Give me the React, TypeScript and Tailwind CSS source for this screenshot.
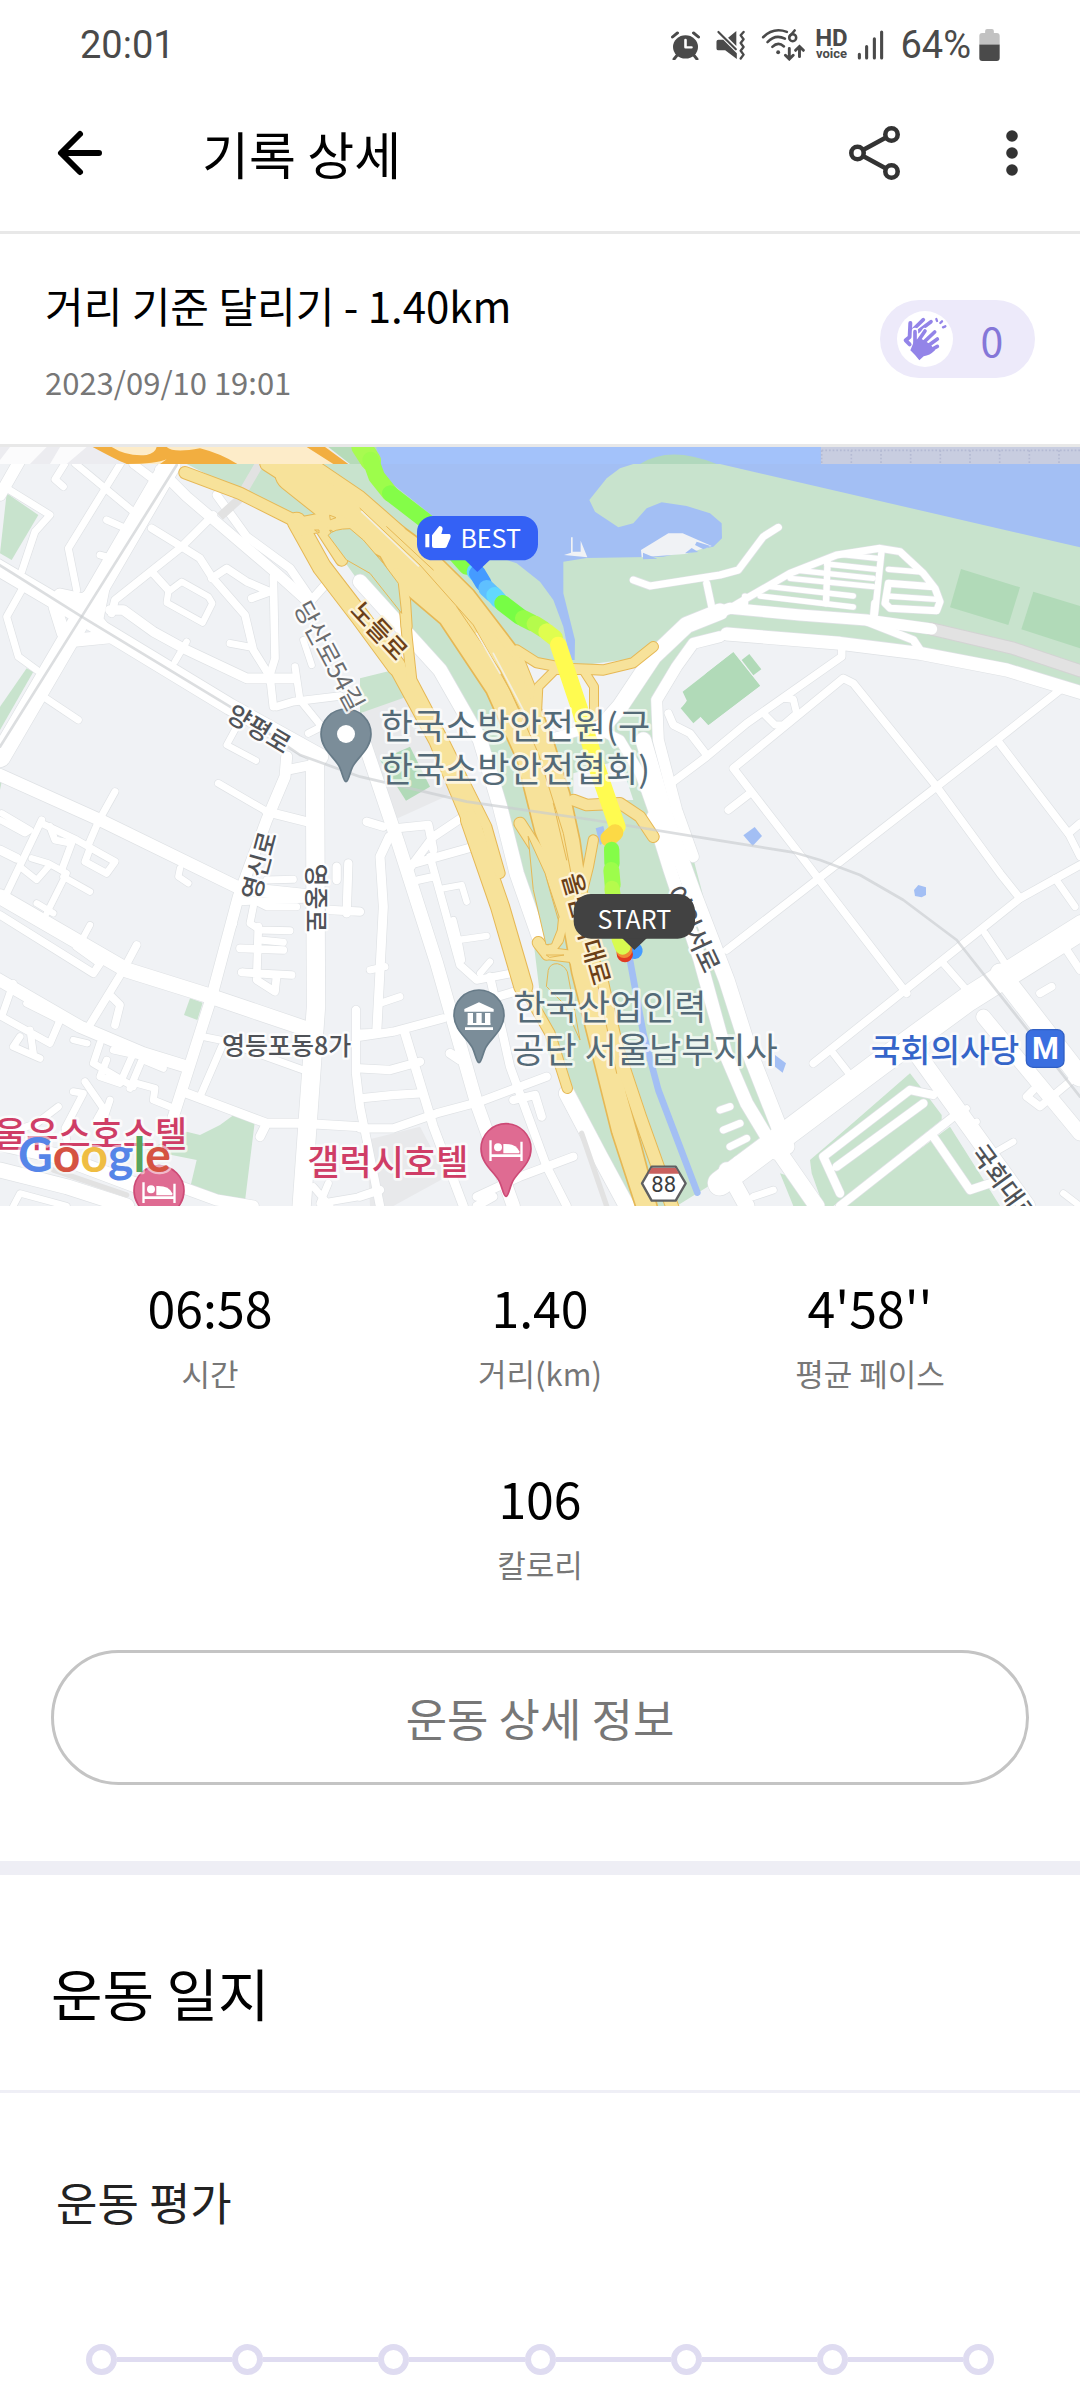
import React from "react";

type Line = [width: number, d: string];

/* ---------- map data (three units per screen pixel) ---------- */

const streets: Line[] = [
  // north-west blocks
  [36, "M60 60L0 165"],
  [22, "M20 145L150 225L105 275L65 395"],
  [22, "M195 70L165 118L190 140"],
  [22, "M225 70L400 215"],
  [22, "M362 70L205 325L230 450"],
  [26, "M400 72L470 125"],
  [64, "M510 75L245 530L0 950"],
  [50, "M-10 380L245 530L690 800L960 950"],
  [40, "M180 465L250 480L310 440L290 540L330 590L230 600L190 580L165 500"],
  [22, "M65 450L20 530L55 650L110 690"],
  [22, "M320 240L370 262"],
  [22, "M300 345L325 352"],
  [24, "M455 265L545 320L600 355L635 410L735 525L760 630L810 710L820 800"],
  [24, "M640 225L540 325L345 480L335 520"],
  [24, "M455 395L505 450"],
  [20, "M545 425L505 455L500 488L608 548L637 490L625 470Z"],
  [24, "M635 415L680 385L740 425L810 455L755 475"],
  [32, "M480 90L560 170L830 400L930 490"],
  [26, "M650 165L740 290L870 385L935 480L975 435"],
  [24, "M820 410L825 655L805 720"],
  [30, "M330 510L370 510L460 575L560 630L740 715L885 715"],
  [22, "M690 610L755 622"],
  [20, "M560 605L525 665"],
  [22, "M885 680L900 780L965 860L925 880"],
  [24, "M830 800L880 785L1020 768"],
  [20, "M910 600L935 675"],
  [22, "M130 770L235 840"],
  [20, "M710 860L680 915L768 962"],
  [38, "M0 1005L300 1140L720 1345L910 1365"],
  [22, "M345 1055L295 1145L265 1215"],
  [22, "M655 1030L810 1120"],
  [34, "M860 950L855 1010L800 1140L715 1370L635 1670L520 2030"],
  [28, "M800 1115L940 1150"],
  [56, "M945 980L948 1700L905 2298"],
  [30, "M860 990L960 970"],
  // west blocks
  [28, "M0 1230L50 1255"],
  [20, "M5 1120L90 1170L75 1180L0 1140"],
  [22, "M125 1140L20 1360M125 1150L230 1200L300 1240L345 1265L320 1300L255 1265L270 1225"],
  [22, "M150 1160L165 1200L215 1210L185 1290"],
  [20, "M95 1255L145 1270L200 1300L140 1420M60 1280L110 1320L145 1280M190 1310L270 1355"],
  [46, "M0 1370L380 1590L620 1665L930 1770"],
  [24, "M0 1425L280 1600L300 1570L230 1520"],
  [20, "M270 1455L235 1520M110 1390L160 1420"],
  [24, "M410 1515L370 1590L260 1770M335 1670L360 1695L345 1755"],
  [38, "M-10 1615L240 1760L430 1840L560 1880"],
  [22, "M40 1630L5 1730L150 1810L180 1740L80 1690M60 1790L40 1820L120 1855M90 1770L100 1840"],
  [22, "M300 1810L280 1870L400 1940M320 1860L300 1910L360 1930L400 1840M340 1830L430 1850L390 1945"],
  [20, "M540 1285L535 1310L565 1330M220 1800L262 1810"],
  [22, "M430 1860L490 1885M410 1930L465 1945L460 1980L510 2000"],
  [22, "M255 1925L310 2005L290 2040M220 1955L250 1960L195 2065L200 2100M330 1980L300 2070"],
  [22, "M175 2000L110 2050L20 2080"],
  [24, "M720 1525L850 1530M700 1450L690 1470M775 1460L770 1620L825 1655L830 1605L725 1597L875 1605"],
  [22, "M800 1320L880 1318M760 1380L800 1400L890 1400M760 1400L750 1450L780 1470L870 1472M780 1500L850 1507"],
  [22, "M720 1385L910 1378"],
  [22, "M610 1790L660 1800L910 1890M665 1820L600 1970"],
  [28, "M560 1960L800 2050L905 2050L1080 2060M800 2050L780 2090"],
  [26, "M1080 1415L990 1410M1045 1270L1040 1420M1010 1280L1010 1320"],
  [26, "M1068 1710L1068 1900L1080 2000L1140 2298"],
  [46, "M0 2190L200 2240L380 2298M0 2110L180 2150L420 2240"],
  [20, "M40 2298L60 2260L200 2298"],
  [34, "M540 2240L650 2280L760 2298"],
  [22, "M940 2240L990 2298M985 2230L960 2290L1080 2270"],
  // central blocks
  [40, "M1080 870L1195 1210L1310 1570L1430 1990L1540 2298"],
  [28, "M1168 1190L1140 1250L1150 1400L1130 1780L1080 1782"],
  [26, "M1215 1278L1440 1215M1225 1290L1300 1190L1420 1110M1100 1145L1150 1160M1185 1165L1285 1155L1300 1230"],
  [24, "M1290 1250L1380 1575L1430 1620L1560 1595M1255 1320L1300 1310"],
  [20, "M1330 1345L1385 1335L1400 1385M1360 1440L1375 1500L1460 1488M1440 1600L1470 1565"],
  [22, "M1375 1505L1385 1560M1140 1690L1200 1670M1110 1590L1155 1580"],
  [26, "M1080 1790L1180 1775L1330 1735M1080 1885L1170 1890L1260 1865M1080 1975L1180 1965L1260 1960"],
  [26, "M1080 2065L1180 2065L1310 2020L1440 1985L1640 1910"],
  [28, "M1215 1780L1300 2060L1390 2298M1350 1840L1380 1860"],
  [26, "M1470 1610L1530 1880L1640 2180L1700 2298M1540 1980L1605 1965L1625 2030"],
  [26, "M1430 2270L1560 2210L1720 2150M1430 2298L1480 2270"],
  [26, "M1460 1680L1560 1650M1080 2270L1140 2250"],
  [44, "M1080 425L1320 690L1440 900L1500 1100L1550 1300L1620 1500"],
  [48, "M1700 1960L1800 2150L1880 2298"],
  [30, "M1640 900L1780 860L1860 900L1920 1000L1990 1200"],
  // west bank of the island
  [40, "M1960 1130L2010 1290L2100 1560L2180 1850L2240 1990L2330 2140"],
  [48, "M1930 900L2000 1140L2080 1360L2180 1620L2250 1840L2360 2120"],
  [50, "M2160 515L2060 555L1960 650L1860 800L1780 890"],
  [34, "M2160 590L2080 610L2030 680L1970 780L1975 900L2030 1110L2080 1250"],
  [22, "M1900 420L1950 438L2160 405L2215 390L2290 290L2335 262M2120 430L2135 500"],
  [24, "M2005 820L2020 855L2070 880L2120 945M2020 1025L2120 950L2240 850L2525 650L2525 630"],
  // yeouido lots
  [22, "M2130 540L2240 475L2370 400L2510 345L2640 325L2700 335L2770 400L2805 445L2820 485L2810 512L2670 505L2655 490L2665 430L2800 440"],
  [20, "M2645 330L2625 520M2483 360L2478 490M2235 470L2235 490"],
  [17, "M2280 468L2560 501M2310 440L2560 468M2370 415L2620 440M2400 392L2620 415M2480 372L2630 388M2520 343L2640 356"],
  [17, "M2665 388L2765 396M2660 468L2810 478"],
  [34, "M2160 515L2190 505L2400 525L2600 540L2795 567"],
  [40, "M3250 760L3020 690L2760 640L2520 610L2180 582"],
  [24, "M2600 545L2740 600L2760 630M2625 490L2620 545"],
  [22, "M2290 820L2325 855L2350 855L2390 820L2380 778L2350 775"],
  [24, "M2200 985L2530 715L2560 730L2810 1040L3000 1300L3060 1375M2200 985L2370 1205L2720 1660M2185 1110L2250 1060"],
  [24, "M3180 750L2990 900L2810 1040L2180 1530M2995 905L3205 1180L3240 1150M3240 1275L3060 1375L2440 1870"],
  [22, "M3205 1180L3240 1250M3165 1315L3225 1400M2955 1480L3015 1570M2830 1570L2900 1650M2500 1840L2570 1930"],
  [74, "M3250 1460L2900 1680L2640 1870L2160 2230"],
  [60, "M3000 1600L3240 1910"],
  [52, "M2750 1840L3080 2298"],
  [44, "M2950 1730L3240 2080"],
  [24, "M3200 1530L3240 1590M3120 1660L3155 1640M3100 1950L3080 1970L3120 2000L3240 1900"],
  [20, "M2880 2020L2900 2005M2900 2060L2930 2045M2980 2140L3040 2105M3190 2260L3240 2298"],
  [48, "M2340 2140L2450 2298M2180 2190L2240 2298"],
  [26, "M2860 2030L2520 2298M2800 2090L2910 2250L3000 2220"],
  [26, "M2800 1965L2730 1950L2470 2150L2520 2260M2770 1990L2510 2180"],
  [22, "M2160 2010L2190 2000M2170 2070L2220 2050M2190 2120L2240 2095M2210 2160L2260 2140M2260 2270L2320 2250"],
];

const highways: Line[] = [
  [36, "M555 98L720 160L890 245"],
  [56, "M890 245L965 380L1080 530L1190 680"],
  [48, "M1190 680L1310 900L1410 1140"],
  [56, "M1410 1140L1500 1400L1570 1640"],
  [30, "M1570 1640L1650 1780L1702 1945"],
  [30, "M1215 520L1222 600L1235 720L1330 900L1460 1160L1500 1300"],
  [40, "M800 72L960 175L1080 240"],
  [110, "M880 100L980 180L1110 270"],
  [36, "M935 72L1080 170L1200 275"],
  [56, "M900 260L1000 240L1080 300"],
  [36, "M960 260L1025 360"],
  [32, "M1190 400L1215 480L1220 560"],
  [26, "M1480 560L1560 660L1600 760L1615 830"],
  [30, "M1550 630L1610 668L1700 685L1810 690L1900 668L1960 620"],
  [26, "M1610 840L1615 740L1665 690L1750 690L1782 740L1782 830"],
  [34, "M1720 1080L1760 1095L1860 1090L1920 1130L1960 1190"],
  [30, "M1780 1200L1765 1280L1740 1380"],
  [30, "M1690 1440L1675 1500L1640 1545"],
  [36, "M1560 1150L1650 1290L1700 1440"],
  [36, "M1615 1508L1640 1540L1720 1550L1760 1620"],
  [38, "M1800 1600L1850 1820L1920 2030L2020 2310"],
];

const mainHighway =
  "M1080 165L1280 312L1420 450L1550 620L1600 745L1660 900L1710 1060L1740 1200L1765 1380L1800 1560L1835 1740L1880 1960L1925 2120L1975 2310H1910L1835 2080L1760 1780L1715 1600L1690 1460L1650 1290L1605 1180L1550 960L1460 760L1320 550L1190 440L1140 350L1080 320Z";

const rails: string[] = [
  "M530 75L245 530L0 920",
  "M-10 370L245 530L690 800L900 945L1080 1010L1400 1085L1780 1140L2160 1202L2380 1237L2460 1260L2580 1305L2710 1380L2870 1500L3020 1690L3240 1970",
];

const routeStart: { color: string; d: string; w: number }[] = [
  { color: "#a8fb50", d: "M1085 20L1112 62", w: 62 },
  { color: "#9dfd4b", d: "M1112 60L1130 110L1170 160", w: 50 },
  { color: "#84fd48", d: "M1170 160L1280 245L1400 380", w: 48 },
  { color: "#62d8ff", d: "M1425 395L1430 400", w: 50 },
  { color: "#459bff", d: "M1432 400L1450 430", w: 50 },
  { color: "#5fc0ff", d: "M1460 445L1478 462", w: 50 },
  { color: "#62d8ff", d: "M1484 466L1496 480", w: 50 },
  { color: "#77fd45", d: "M1508 490L1560 530", w: 50 },
  { color: "#96fd48", d: "M1570 535L1595 548", w: 50 },
  { color: "#b5fb4c", d: "M1605 552L1630 568", w: 50 },
  { color: "#dffd4f", d: "M1640 575L1664 594", w: 50 },
  { color: "#fffb50", d: "M1675 615L1740 810L1790 980L1852 1160", w: 50 },
  { color: "#fcd945", d: "M1845 1178L1826 1195", w: 50 },
];

const routeEnd: { color: string; d: string; w: number }[] = [
  { color: "#84fd48", d: "M1835 1228L1836 1270", w: 46 },
  { color: "#9dfd4b", d: "M1834 1290L1838 1335", w: 48 },
  { color: "#b5fb4c", d: "M1836 1345L1850 1450", w: 46 },
  { color: "#459bff", d: "M1900 1530L1903 1532", w: 50 },
  { color: "#e13a22", d: "M1874 1542L1875 1543", w: 48 },
  { color: "#f08a35", d: "M1872 1530L1873 1530", w: 48 },
  { color: "#d8fb50", d: "M1858 1495L1868 1520", w: 48 },
];

/* ---------- map pieces ---------- */

function Pin({ x, y, fill, edge, children }: { x: number; y: number; fill: string; edge: string; children: React.ReactNode }) {
  return (
    <g transform={`translate(${x} ${y})`}>
      <path
        d="M0 143C-8 143-10 118-20 98C-34 70-75 46-75 0A75 75 0 0 1 75 0C75 46 34 70 20 98C10 118 8 143 0 143Z"
        fill={fill}
        stroke={edge}
        strokeWidth="5"
      />
      {children}
    </g>
  );
}

function Bed() {
  return (
    <g fill="#fff">
      <path d="M-50 -25h7v42h86v-38h7v58h-7v-12h-86v12h-7z" />
      <circle cx="-24" cy="-4" r="12" />
      <path d="M-8 12V-14Q30-16 40 8V14H-8Z" />
    </g>
  );
}

const halo = "[paint-order:stroke] [stroke-linejoin:round]";

function RouteMap() {
  return (
    <svg viewBox="0 21 3240 2277" className="block w-full" role="img" aria-label="달리기 경로 지도" strokeLinejoin="round" strokeLinecap="round" fontFamily="'Noto Sans CJK KR', sans-serif">
      <rect x="0" y="21" width="3240" height="2277" fill="#f0f2f5" />
      <g fill="#e8e9eb">
        <path d="M1080 780L1260 740L1380 1050L1160 1150Z" />
        <path d="M1100 2100L1260 2060L1340 2210L1180 2298H1110Z" />
      </g>
      {/* parks along the river */}
      <path
        fill="#c8e3cd"
        d="M560 72H3240V740L3000 670L2760 630L2520 600L2180 570L2060 630L1960 780L1975 900L2060 1180L2160 1560L2230 1800L2320 2070L2300 2130L2030 2298H1900L1700 1960L1640 1830L1600 1500L1530 1250L1450 950L1310 690L1080 430L980 290L880 235Z"
      />
      <g fill="#c8e3cd">
        <path d="M20 160L115 225L35 360L0 340Z" />
        <path d="M80 685L100 695L0 870V800Z" />
        <path d="M0 985L10 1000L0 1050Z" />
        <path d="M1080 715L1180 690L1250 760L1080 820Z" />
        <path d="M570 1675L608 1688L592 1740L552 1725Z" />
        <path d="M560 2075L600 2085L660 2055L705 2022L765 2040L735 2283L570 2245L590 2160L440 2130Z" />
        <path d="M2730 1900L2765 1945L2825 2025V2040L2500 2298H2470L2435 2200L2430 2160L2500 2100Z" />
        <path d="M2850 2060L3000 2298H2530Z" />
        <path d="M2340 2200L2400 2220L2440 2298H2380Z" />
      </g>
      <g fill="#b1dab8">
        <path d="M2883 387L3060 442L3025 555L2850 502Z" />
        <path d="M3100 455L3240 498V625L3064 568Z" />
        <path d="M2048 755L2200 637L2280 737L2125 855L2075 800L2060 850L2042 800Z" />
        <path d="M2225 660L2248 642L2284 688L2260 706Z" />
        <path d="M1140 960L1230 920L1290 1040L1218 1082Z" />
      </g>
      <path fill="#f0f2f5" d="M1570 665L1640 690L1940 650L1850 800L1760 860L1640 920Z" />
      <path fill="#f0f2f5" d="M1720 1000L1860 960L1900 1080L1720 1080Z" />
      <path fill="#f0f2f5" d="M2048 800L2160 640L2180 600L2080 630L1980 790L1985 900L2060 1180L2160 1200V900Z" />
      <path fill="#b1dab8" d="M2048 755L2200 637L2280 737L2125 855L2102 830L2080 850L2042 805L2062 785Z" />
      {/* river */}
      <g fill="#a3bff4">
        <path d="M1130 72H1900L1860 85L1820 115L1768 180L1785 215L1855 262L1900 250L1940 205L1985 187L2060 198L2130 220L2165 250L2166 295L2140 320L2060 335L1990 350L1760 354L1690 365L1690 460L1725 600L1724 660H1710L1690 560L1660 480L1620 425L1550 370L1430 330L1300 230L1150 110Z" />
        <path d="M2160 72H3240V322Z" />
        <path d="M1787 1165L1810 1158L1820 1200L1800 1215Z" />
        <path d="M2230 1186L2264 1161L2286 1188L2258 1218Z" />
        <path d="M2742 1350L2755 1335L2778 1342V1365L2765 1372L2745 1368Z" />
        <path d="M2325 1845L2358 1870L2348 1898L2325 1880Z" />
      </g>
      <path d="M1888 1550L1930 1780L1975 1950L2092 2258" fill="none" stroke="#a3bff4" strokeWidth="20" />
      <g fill="#f0f2f5">
        <path d="M1923 330L2005 280H2048L2135 318L2055 342L1925 352Z" />
        <path d="M1713 292H1718V335H1742V302L1762 352L1692 345L1713 338Z" />
      </g>
      <path d="M2055 340L2075 324L2095 336ZM2090 305L2132 318L2110 328L2085 315ZM1929 338L1972 356L1929 358Z" fill="#a3bff4" />

      {/* streets */}
      <g fill="none">
        {streets.map(([w, d], i) => (
          <path key={i} d={d} stroke="#dfe2e5" strokeWidth={w + 3} />
        ))}
        <path d="M2795 567L3040 625L3240 692" stroke="#d3d3d3" strokeWidth="40" />
        <path d="M2795 567L3040 625L3240 692" stroke="#e2e2e2" strokeWidth="34" />
        {streets.map(([w, d], i) => (
          <path key={i} d={d} stroke="#ffffff" strokeWidth={w - 1} />
        ))}
        <path d="M785 60L715 180L660 230" stroke="#e2e2e2" strokeWidth="26" strokeLinecap="butt" />
        <path d="M1745 2080L1820 2298M160 2190L380 2265" stroke="#e2e2e2" strokeWidth="16" />
        {highways.map(([w, d], i) => (
          <path key={i} d={d} stroke="#e6b855" strokeWidth={w + 4} />
        ))}
        <path d={mainHighway} fill="#f7e29a" stroke="#e6b855" strokeWidth="5" />
        {highways.map(([w, d], i) => (
          <path key={i} d={d} stroke="#f7e29a" strokeWidth={w - 2} />
        ))}
        <path
          d="M1080 205L1260 375L1420 555L1530 750L1615 940L1690 1180L1740 1440M1370 500L1500 690L1580 850M1160 260L1300 390M1660 1090L1700 1260M1790 1620L1850 1900"
          stroke="#e6b855"
          strokeWidth="3"
        />
        <path d="M1085 215L1255 378M1430 580L1500 700M1480 640L1575 820" stroke="#f3efe0" strokeWidth="5" />
        <path d="M2990 0" />
        {rails.map((d) => (
          <path key={d} d={d} stroke="#c9cccf" strokeOpacity="0.65" strokeWidth="8" />
        ))}
      </g>
      {/* green islands between the ramps */}
      <g fill="#c8e3cd" stroke="#e6b855" strokeWidth="3">
        <path d="M985 285Q1000 266 1050 266L1090 300L1150 370L1195 430L1205 520L1110 400L1040 360Z" />
        <path d="M1645 1590Q1650 1570 1672 1571Q1692 1575 1702 1595L1720 1690L1740 1800L1690 1690L1640 1640Z" />
        <path d="M1585 1190L1635 1300L1675 1440L1672 1470L1655 1512L1638 1514L1600 1350Z" />
      </g>
      <path d="M990 226L1008 233L992 239ZM945 270H957V278ZM1640 1545H1692L1650 1552Z" fill="#f7e29a" stroke="#e6b855" strokeWidth="3" />

      {/* low-detail tiles still visible at the top edge */}
      <g>
        <rect x="0" y="21" width="1140" height="51" fill="#ececf0" />
        <path d="M30 21H140L90 72H0V60ZM180 21L260 21L200 72H150Z" fill="#fbfbfc" />
        <path d="M280 21H980L1040 72H400Z" fill="#fdecc9" />
        <path d="M278 21H335Q380 50 440 45Q465 40 470 21H500Q520 40 600 25Q660 40 712 72H480L500 58Q470 72 380 72Q350 60 278 21ZM920 21H975L1045 72H1000Z" fill="#f2ae40" />
        <path d="M985 21H1140V72H1050Z" fill="#b6dbb9" />
        <rect x="1130" y="21" width="1333" height="51" fill="#a3c2fa" />
        <path d="M1920 72Q2010 15 2150 72Z" fill="#b1d8bd" />
        <rect x="2463" y="21" width="777" height="51" fill="#c8cde0" />
        <path d="M2465 31H3240M2465 31V72M2554 31V72M2643 31V72M2732 31V72M2821 31V72M2910 31V72M2999 31V72M3088 31V72M3177 31V72" fill="none" stroke="#b4bad3" strokeWidth="5" strokeDasharray="5 6" strokeLinecap="butt" />
      </g>

      {/* run track */}
      <g fill="none">
        {routeStart.map((s) => (
          <path key={s.d} d={s.d} stroke={s.color} strokeWidth={s.w} />
        ))}
        {routeEnd.map((s) => (
          <path key={s.d} d={s.d} stroke={s.color} strokeWidth={s.w} />
        ))}
      </g>

      {/* pins */}
      <Pin x={1038} y={882} fill="#7b8d99" edge="#677b88">
        <circle r="27" fill="#fff" />
      </Pin>
      <Pin x={1437} y={1725} fill="#7b8d99" edge="#677b88">
        <path d="M-44 -18L0 -38L44 -18V-10H-44ZM-34 -6H-18V30H-34ZM-8 -6H8V30H-8ZM18 -6H34V30H18ZM-42 37H42V45H-42Z" fill="#fff" />
        <path d="M-34 24H34V30H-34Z" fill="#fff" />
      </Pin>
      <Pin x={1518} y={2126} fill="#df6b92" edge="#cd4a76">
        <Bed />
      </Pin>
      <Pin x={477} y={2252} fill="#df6b92" edge="#cd4a76">
        <Bed />
      </Pin>

      {/* street names */}
      <g className={halo} fill="#4f5257" stroke="#ffffff" strokeOpacity="0.85" strokeWidth="14" textAnchor="middle" dominantBaseline="central" fontSize="75" fontWeight="500">
        <text transform="translate(993 645) rotate(62)" fill="#6a6c6f" fontWeight="400">당산로54길</text>
        <text transform="translate(780 862) rotate(31)">양평로</text>
        <text transform="translate(772 1275) rotate(-75)">영신로</text>
        <text transform="translate(953 1374) rotate(90)">영중로</text>
        <text x="860" y="1812">영등포동8가</text>
        <text transform="translate(2085 1465) rotate(65)">여의서로</text>
        <text transform="translate(3018 2230) rotate(54)">국회대로</text>
      </g>
      <g className={halo} fill="#6b4018" stroke="#fdf3d6" strokeWidth="14" textAnchor="middle" dominantBaseline="central" fontSize="75" fontWeight="500">
        <text transform="translate(1142 568) rotate(47)">노들로</text>
        <text transform="translate(1765 1465) rotate(74)">올림픽대로</text>
      </g>

      {/* places */}
      <g className={halo} fontSize="105" stroke="#ffffff" strokeOpacity="0.7" strokeWidth="16">
        <g fill="#546a77">
          <text x="1142" y="898">한국소방안전원(구</text>
          <text x="1142" y="1026">한국소방안전협회)</text>
          <text x="1540" y="1741">한국산업인력</text>
          <text x="1537" y="1869">공단 서울남부지사</text>
        </g>
        <g fill="#cf3d66" fontWeight="500">
          <text x="-18" y="2120">울유스호스텔</text>
          <text x="922" y="2206">갤럭시호텔</text>
        </g>
        <text x="2612" y="1865" fill="#3565c9" fontSize="97" fontWeight="500">국회의사당</text>
      </g>
      <rect x="3079" y="1769" width="113" height="113" rx="20" fill="#3a6fe0" stroke="#3160c4" strokeWidth="4" />
      <text x="3136" y="1858" textAnchor="middle" fontFamily="Roboto, sans-serif" fontWeight="700" fontSize="92" fill="#fff">M</text>

      {/* road shield */}
      <path d="M1955 2180H2027L2057 2230L2027 2282H1955L1926 2230Z" fill="#fff" stroke="#5f6062" strokeWidth="7" />
      <path d="M1955 2184H2027L2037 2201H1945Z" fill="#c9605e" />
      <text x="1991" y="2257" textAnchor="middle" fontFamily="Roboto, sans-serif" fontSize="66" fill="#3c3d3f">88</text>

      {/* provider mark */}
      <text x="54" y="2197" fontFamily="Lato, sans-serif" fontSize="144" fontWeight="700" stroke="#ffffff" strokeOpacity="0.55" strokeWidth="14" className={halo}>
        <tspan fill="#5585e8">G</tspan>
        <tspan fill="#d55342">o</tspan>
        <tspan fill="#efbd42">o</tspan>
        <tspan fill="#5585e8">g</tspan>
        <tspan fill="#58a55c">l</tspan>
        <tspan fill="#d55342">e</tspan>
      </text>

      {/* callouts */}
      <g>
        <path d="M1390 355H1475L1432 396Z" fill="#3461f5" />
        <rect x="1251" y="228" width="363" height="133" rx="48" fill="#3461f5" />
        <path d="M1276 282H1288V322H1276ZM1296 286L1318 258Q1328 258 1328 268L1324 282H1348Q1354 284 1351 294L1340 320Q1338 324 1332 324H1302Q1296 324 1296 318Z" fill="#fff" />
        <text x="1472" y="323" textAnchor="middle" fontSize="75" fill="#fff">BEST</text>
        <path d="M1862 1490H1945L1903 1530Z" fill="#424242" />
        <rect x="1721" y="1362" width="364" height="134" rx="52" fill="#424242" />
        <text x="1903" y="1467" textAnchor="middle" fontSize="75" fill="#fff">START</text>
      </g>
    </svg>
  );
}

/* ---------- status bar icons ---------- */

function AlarmIcon() {
  return (
    <svg width="29" height="29" viewBox="0 0 29 31" preserveAspectRatio="none" aria-hidden="true">
      <circle cx="14.500" cy="17" r="12.500" fill="#4a4a4a" />
      <path d="M1.500 6.500L6.500 2M27.500 6.500L22.500 2M6 26L3 30M23 26L26 30" stroke="#4a4a4a" strokeWidth="3" strokeLinecap="round" />
      <path d="M14.500 9.500V17.500H20.500" fill="none" stroke="#fff" strokeWidth="2.600" strokeLinecap="round" strokeLinejoin="round" />
    </svg>
  );
}

function MuteVibrateIcon() {
  return (
    <svg width="30" height="30" viewBox="0 0 30 31" aria-hidden="true">
      <path d="M2 10H7L21 24V30L9 21H2Q0 21 0 19V12Q0 10 2 10ZM12 8L20.500 1V16.500Z" fill="#4a4a4a" />
      <path d="M2 2L20 20" stroke="#4a4a4a" strokeWidth="2.200" strokeLinecap="round" />
      <path d="M28 2L25 5.500L28 9.500L25 13.500L28 17.500L25 21.500L28 25.500L25 29.500" fill="none" stroke="#4a4a4a" strokeWidth="2.400" strokeLinejoin="round" strokeLinecap="round" />
    </svg>
  );
}

function WifiSixIcon() {
  return (
    <svg width="44" height="32" viewBox="0 0 44 33" aria-hidden="true">
      <g fill="none" stroke="#4a4a4a" strokeLinecap="round" strokeWidth="2.600">
        <path d="M1.500 8.500Q12-2 26 3" />
        <path d="M6 13.500Q14 5 24 10" />
        <path d="M11 18.500Q17 12.500 23 18" />
        <circle cx="32" cy="9" r="3.600" />
        <path d="M29 7.500L34 1.500" />
        <path strokeWidth="3" d="M28.500 20V30.500M24.500 27L28.500 31L32.500 27M39 28.500V18M35 22L39 18L43 22" />
      </g>
      <circle cx="17" cy="24" r="2" fill="#4a4a4a" />
    </svg>
  );
}

function SignalIcon() {
  return (
    <svg width="27" height="30" viewBox="0 0 27 31" aria-hidden="true">
      <path d="M2 25V29M9.500 17V29M17.500 9V29M25 2V29" stroke="#4a4a4a" strokeWidth="3.200" strokeLinecap="round" />
    </svg>
  );
}

function BatteryIcon() {
  return (
    <svg width="21" height="32" viewBox="0 0 21 33" aria-hidden="true">
      <path d="M6 2Q6 0 8 0H13Q15 0 15 2V4H18Q21 4 21 7V16H0V7Q0 4 3 4H6Z" fill="#c2c2c2" />
      <path d="M0 16H21V30Q21 33 18 33H3Q0 33 0 30Z" fill="#4a4a4a" />
    </svg>
  );
}

function ClapIcon() {
  return (
    <svg width="56" height="56" viewBox="0 0 168 168" aria-hidden="true">
      <g fill="none" stroke="#9384e8" strokeLinecap="round" strokeLinejoin="round">
        <path d="M40 36L38 78L26 88L38 100" strokeWidth="12" />
        <path d="M50 54L79 26M62 62L102 32" strokeWidth="11" />
        <path d="M118 24L120 30M130 36L135 31M138 49L145 46" strokeWidth="7" />
        <path d="M54 60L54 112M62 90L84 60M76 98L113 63M88 108L121 84M98 116L121 106" strokeWidth="19" stroke="#fff" />
        <path d="M54 62L54 112M62 92L84 60M76 98L113 63M88 108L121 84M96 120L121 106" strokeWidth="11" />
      </g>
      <path d="M50 94L70 82L100 100L114 118Q98 134 80 136L67 148L54 132L40 118Z" fill="#9384e8" />
    </svg>
  );
}

/* ---------- page ---------- */

const stats = [
  { value: "06:58", label: "시간" },
  { value: "1.40", label: "거리(km)" },
  { value: "4'58''", label: "평균 페이스" },
];

function Stat({ value, label }: { value: string; label: string }) {
  return (
    <div className="flex flex-col items-center gap-[17px]">
      <dd className="text-[50px] leading-[60px] text-black">{value}</dd>
      <dt className="order-last text-[31px] leading-[40px] text-[#777777]">{label}</dt>
    </div>
  );
}

export default function App() {
  return (
    <div className="min-h-screen w-full bg-white font-['Noto_Sans_CJK_KR',sans-serif] text-black">
      <div className="flex h-[74px] items-center justify-between px-[80px] pt-4 font-[Roboto,sans-serif] text-[#4a4a4a]">
        <span className="text-[38px] leading-[40px]">20:01</span>
        <div className="flex items-center">
          <AlarmIcon />
          <span className="w-4" />
          <MuteVibrateIcon />
          <span className="w-[15px]" />
          <WifiSixIcon />
          <span className="flex w-[52px] flex-col items-center font-bold">
            <span className="text-[24px] leading-[18px]">HD</span>
            <span className="text-[13px] leading-[14px]">voice</span>
          </span>
          <SignalIcon />
          <span className="pr-2 pl-4 text-[38px] leading-[40px]">64%</span>
          <BatteryIcon />
        </div>
      </div>

      <header className="flex h-[160px] items-center border-b-[3px] border-[#e8e8e8] pr-[61px] pl-[56px]">
        <button type="button" aria-label="뒤로">
          <svg width="48" height="48" viewBox="0 0 48 48" fill="none" stroke="#000" strokeWidth="6" strokeLinecap="round" strokeLinejoin="round" aria-hidden="true">
            <path d="M43 24H6M24 5L5 24L24 43" />
          </svg>
        </button>
        <h1 className="ml-[98px] flex-1 text-[51px] leading-[60px]">기록 상세</h1>
        <button type="button" aria-label="공유" className="mr-[104px]">
          <svg width="52" height="54" viewBox="0 0 52 54" fill="none" stroke="#333" strokeWidth="4.600" aria-hidden="true">
            <circle cx="8.500" cy="27" r="6.200" />
            <circle cx="42.500" cy="8.500" r="6.200" />
            <circle cx="42.500" cy="45.500" r="6.200" />
            <path d="M14 24L37 11.500M14 30L37 42.500" />
          </svg>
        </button>
        <button type="button" aria-label="더 보기">
          <svg width="14" height="48" viewBox="0 0 14 48" fill="#333" aria-hidden="true">
            <circle cx="7" cy="7" r="5.800" />
            <circle cx="7" cy="24" r="5.800" />
            <circle cx="7" cy="41" r="5.800" />
          </svg>
        </button>
      </header>

      <main>
        <section className="flex items-center justify-between border-b-[3px] border-[#e8e8e8] px-[45px] pt-[41px] pb-[42px]">
          <div className="flex flex-col gap-[27px]">
            <h2 className="text-[42px] leading-[60px]">거리 기준 달리기 - 1.40km</h2>
            <p className="text-[31px] leading-[40px] text-[#777777]">2023/09/10 19:01</p>
          </div>
          <button type="button" aria-label="박수 0" className="flex h-[78px] w-[155px] items-center rounded-full bg-[#edeafa] pl-[17px]">
            <span className="rounded-full bg-white">
              <ClapIcon />
            </span>
            <span className="flex-1 pr-1 text-center text-[41px] leading-[60px] text-[#8577d8]">0</span>
          </button>
        </section>

        <RouteMap />

        <section className="px-[51px] pt-[70px] pb-[76px]">
          <dl>
            <div className="-mx-[6px] grid grid-cols-3">
              {stats.map((s) => (
                <Stat key={s.label} value={s.value} label={s.label} />
              ))}
            </div>
            <div className="mt-[74px]">
              <Stat value="106" label="칼로리" />
            </div>
          </dl>
          <button type="button" className="mt-[66px] flex h-[135px] w-full items-center justify-center rounded-full border-[3px] border-[#c4c4c4] text-[45px] leading-[60px] text-[#777777]">
            운동 상세 정보
          </button>
        </section>

        <div className="h-[14px] bg-[#eeeef5]" />

        <section>
          <h2 className="border-b-[3px] border-[#efeff6] px-[51px] pt-[77px] pb-[58px] text-[56px] leading-[80px]">운동 일지</h2>
          <fieldset className="pt-[79px] pb-6">
            <legend className="float-left w-full px-[56px] text-[45px] leading-[60px] text-[#222222]">운동 평가</legend>
            <div className="clear-both flex items-center justify-between px-[86px] pt-[112px]">
              {[1, 2, 3, 4, 5, 6, 7].map((n) => (
                <React.Fragment key={n}>
                  {n > 1 && <span className="h-[5px] flex-1 bg-[#dfdcf1]" />}
                  <input
                    type="radio"
                    name="rating"
                    value={n}
                    aria-label={`${n}점`}
                    className="m-0 size-[31px] shrink-0 appearance-none rounded-full border-[6px] border-[#dfdcf1] bg-white"
                  />
                </React.Fragment>
              ))}
            </div>
          </fieldset>
        </section>
      </main>
    </div>
  );
}
